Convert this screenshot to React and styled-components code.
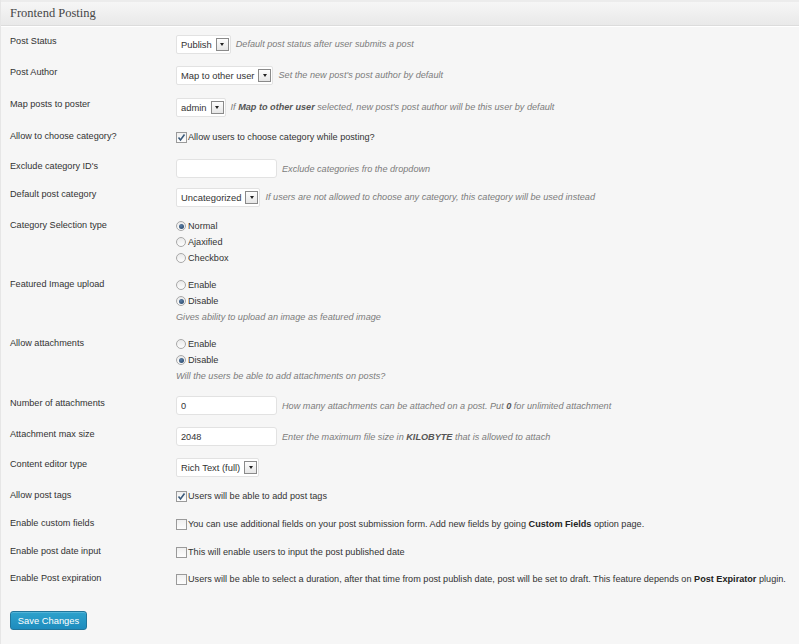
import React from "react";
import styled, { createGlobalStyle } from "styled-components";

const GlobalStyle = createGlobalStyle`
  body {
    margin: 0;
    background: #f6f6f6;
    font-family: "Liberation Sans", Arial, sans-serif;
    color: #333;
  }
`;

const Panel = styled.div`
  border-left: 1px solid #e6e6e6;
  min-height: 644px;
  box-sizing: border-box;
`;

const Header = styled.h3`
  margin: 0;
  height: 23px;
  border-top: 2px solid #ececec;
  border-bottom: 1px solid #dcdcdc;
  box-shadow: 0 1px 0 #fff;
  background: linear-gradient(#f6f6f6, #e9e9e9);
  padding: 0 9px;
  font-family: "Liberation Serif", Georgia, serif;
  font-weight: normal;
  font-size: 12.5px;
  line-height: 23px;
  color: #464646;
`;

const Form = styled.div`
  padding: 4px 10px 0 9px;
`;

const Row = styled.div`
  display: grid;
  grid-template-columns: 166px 1fr;
  align-items: start;
  padding: 4px 0 ${(p) => p.$bottom || 7}px;
  font-size: 9.15px;
`;

const Label = styled.div`
  line-height: 14px;
  color: #333;
`;

const Field = styled.div`
  display: flex;
  align-items: center;
  flex-wrap: nowrap;
  white-space: nowrap;
  min-height: 14px;
`;

const Stack = styled.div`
  display: flex;
  flex-direction: column;
`;

const SelectBox = styled.div`
  display: inline-flex;
  align-items: center;
  height: 19px;
  margin-top: 1px;
  box-sizing: border-box;
  border: 1px solid #e2e2e2;
  border-radius: 2px;
  background: #fff;
  padding: 0 1px 0 4px;
  gap: 4px;
  font-size: 9.4px;
  color: #333;
`;

const Arrow = styled.span`
  width: 13px;
  height: 13px;
  box-sizing: border-box;
  border: 1px solid #8a8a8a;
  background: linear-gradient(#fdfdfd, #e6e6e6);
  display: inline-flex;
  align-items: center;
  justify-content: center;
  &::after {
    content: "";
    border-left: 2.5px solid transparent;
    border-right: 2.5px solid transparent;
    border-top: 3px solid #222;
  }
`;

const Desc = styled.span`
  font-style: italic;
  color: #7c7c7c;
  margin-left: ${(p) => (p.$inline ? 5 : 0)}px;
  line-height: ${(p) => (p.$inline ? "normal" : "16px")};
  b {
    color: #555;
  }
`;

const TextInput = styled.input`
  width: 101px;
  height: 19px;
  box-sizing: border-box;
  border: 1px solid #e2e2e2;
  border-radius: 3px;
  background: #fff;
  padding: 0 4px;
  font-family: inherit;
  font-size: 9.2px;
  color: #333;
  outline: none;
`;

const CheckLine = styled.label`
  display: flex;
  align-items: center;
  gap: 1px;
  line-height: 17px;
  color: #333;
  white-space: nowrap;
  b {
    color: #222;
  }
`;

const Box = styled.span`
  width: 11px;
  height: 11px;
  box-sizing: border-box;
  border: 1px solid #9a9a9a;
  background: linear-gradient(#f0f0f0, #fdfdfd);
  display: inline-flex;
  align-items: center;
  justify-content: center;
  flex: none;
`;

const RadioLine = styled.label`
  display: flex;
  align-items: center;
  gap: 2px;
  height: 16px;
  color: #333;
`;

const Circle = styled.span`
  width: 10px;
  height: 10px;
  box-sizing: border-box;
  border-radius: 50%;
  border: 1px solid #a8a8a8;
  background: linear-gradient(#eaeaea, #fdfdfd);
  display: inline-flex;
  align-items: center;
  justify-content: center;
  flex: none;
  &::after {
    content: "";
    display: ${(p) => (p.$on ? "block" : "none")};
    width: 5px;
    height: 5px;
    border-radius: 50%;
    background: radial-gradient(circle at 40% 35%, #5a7ea6, #223f60);
  }
`;

const SaveButton = styled.button`
  margin-top: 16px;
  width: 77px;
  height: 19px;
  border: 1px solid #21759b;
  border-radius: 3px;
  background: linear-gradient(#2ea2cc, #1e8cbe);
  box-shadow: inset 0 1px 0 rgba(120, 200, 230, 0.5);
  color: #fff;
  font-family: inherit;
  font-size: 9.4px;
  padding: 0;
  cursor: pointer;
`;

function Select({ value }) {
  return (
    <SelectBox>
      {value}
      <Arrow />
    </SelectBox>
  );
}

function Checkbox({ checked, children }) {
  return (
    <CheckLine>
      <Box>
        {checked && (
          <svg width="9" height="9" viewBox="0 0 9 9">
            <path d="M1.5 4.5 L3.5 7 L7.5 1.5" fill="none" stroke="#3b5a7a" strokeWidth="1.6" />
          </svg>
        )}
      </Box>
      <span>{children}</span>
    </CheckLine>
  );
}

function Radios({ options, selected, note }) {
  return (
    <Stack>
      {options.map((o) => (
        <RadioLine key={o}>
          <Circle $on={o === selected} />
          {o}
        </RadioLine>
      ))}
      {note && <Desc>{note}</Desc>}
    </Stack>
  );
}

export default function App() {
  return (
    <Panel>
      <GlobalStyle />
      <Header>Frontend Posting</Header>
      <Form>
        <Row>
          <Label>Post Status</Label>
          <Field>
            <Select value="Publish" />
            <Desc $inline>Default post status after user submits a post</Desc>
          </Field>
        </Row>
        <Row $bottom={8}>
          <Label>Post Author</Label>
          <Field>
            <Select value="Map to other user" />
            <Desc $inline>Set the new post's post author by default</Desc>
          </Field>
        </Row>
        <Row $bottom={8}>
          <Label>Map posts to poster</Label>
          <Field>
            <Select value="admin" />
            <Desc $inline>
              If <b>Map to other user</b> selected, new post's post author will be this user by default
            </Desc>
          </Field>
        </Row>
        <Row $bottom={9}>
          <Label>Allow to choose category?</Label>
          <Field>
            <Checkbox checked>Allow users to choose category while posting?</Checkbox>
          </Field>
        </Row>
        <Row $bottom={5}>
          <Label>Exclude category ID's</Label>
          <Field>
            <TextInput defaultValue="" />
            <Desc $inline>Exclude categories fro the dropdown</Desc>
          </Field>
        </Row>
        <Row $bottom={7}>
          <Label>Default post category</Label>
          <Field>
            <Select value="Uncategorized" />
            <Desc $inline>
              If users are not allowed to choose any category, this category will be used instead
            </Desc>
          </Field>
        </Row>
        <Row>
          <Label>Category Selection type</Label>
          <Radios options={["Normal", "Ajaxified", "Checkbox"]} selected="Normal" />
        </Row>
        <Row>
          <Label>Featured Image upload</Label>
          <Radios
            options={["Enable", "Disable"]}
            selected="Disable"
            note="Gives ability to upload an image as featured image"
          />
        </Row>
        <Row $bottom={8}>
          <Label>Allow attachments</Label>
          <Radios
            options={["Enable", "Disable"]}
            selected="Disable"
            note="Will the users be able to add attachments on posts?"
          />
        </Row>
        <Row $bottom={8}>
          <Label>Number of attachments</Label>
          <Field>
            <TextInput defaultValue="0" />
            <Desc $inline>
              How many attachments can be attached on a post. Put <b>0</b> for unlimited attachment
            </Desc>
          </Field>
        </Row>
        <Row>
          <Label>Attachment max size</Label>
          <Field>
            <TextInput defaultValue="2048" />
            <Desc $inline>
              Enter the maximum file size in <b>KILOBYTE</b> that is allowed to attach
            </Desc>
          </Field>
        </Row>
        <Row>
          <Label>Content editor type</Label>
          <Field>
            <Select value="Rich Text (full)" />
          </Field>
        </Row>
        <Row>
          <Label>Allow post tags</Label>
          <Field>
            <Checkbox checked>Users will be able to add post tags</Checkbox>
          </Field>
        </Row>
        <Row>
          <Label>Enable custom fields</Label>
          <Field>
            <Checkbox>
              You can use additional fields on your post submission form. Add new fields by going{" "}
              <b>Custom Fields</b> option page.
            </Checkbox>
          </Field>
        </Row>
        <Row $bottom={6}>
          <Label>Enable post date input</Label>
          <Field>
            <Checkbox>This will enable users to input the post published date</Checkbox>
          </Field>
        </Row>
        <Row>
          <Label>Enable Post expiration</Label>
          <Field>
            <Checkbox>
              Users will be able to select a duration, after that time from post publish date, post will be
              set to draft. This feature depends on <b>Post Expirator</b> plugin.
            </Checkbox>
          </Field>
        </Row>
        <SaveButton>Save Changes</SaveButton>
      </Form>
    </Panel>
  );
}
